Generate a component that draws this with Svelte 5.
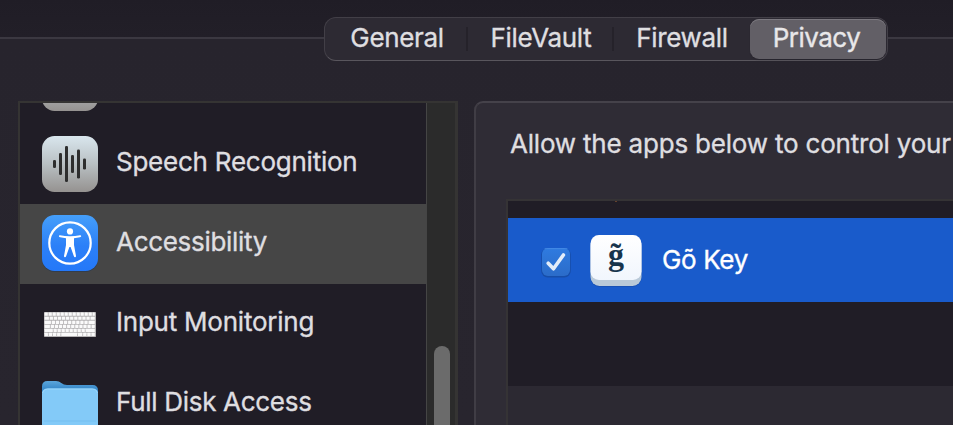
<script>
  const tabs = [
    { label: 'General', width: 142, spacing: -0.35 },
    { label: 'FileVault', width: 146, spacing: -0.3 },
    { label: 'Firewall', width: 136, spacing: -0.35 },
    { label: 'Privacy', width: 136, spacing: -0.5, active: true }
  ];
  const items = [
    { label: '', icon: 'blank', spacing: 0 },
    { label: 'Speech Recognition', icon: 'speech', spacing: -0.24 },
    { label: 'Accessibility', icon: 'access', spacing: -0.3, active: true },
    { label: 'Input Monitoring', icon: 'keyboard', spacing: -0.23 },
    { label: 'Full Disk Access', icon: 'folder', spacing: -0.3 }
  ];
  const bars = [[54.5, 8], [60.5, 22], [66.5, 36], [72.5, 18], [78.5, 29], [84.5, 11]];
  const keyRows = [
    [4, 4, 4, 4, 4, 4, 4, 4, 4, 4, 4, 4, 3],
    [5, 4, 4, 4, 4, 4, 4, 4, 4, 4, 4, 5],
    [7, 4, 4, 4, 4, 4, 4, 4, 4, 4, 7],
    [6, 4, 4, 4, 4, 4, 4, 4, 4, 4, 4, 4],
    [9, 4, 4, 4, 4, 4, 4, 4, 4, 10],
    [4, 4, 4, 4, 16, 5, 4, 4, 4]
  ];
  const keys = keyRows.flatMap((row, r) => {
    const total = row.reduce((a, b) => a + b, 0);
    let x = 2.6;
    return row.map((w) => {
      const width = (w / total) * 51;
      const key = { x, y: 13.6 + r * 4.05, w: width - 0.8 };
      x += width;
      return key;
    });
  });
</script>

<div class="window">
  <header>
    <i class="rule left"></i>
    <nav>
      {#each tabs as tab}
        <button class:active={tab.active} style:width="{tab.width}px" style:letter-spacing="{tab.spacing}px">{tab.label}</button>
      {/each}
    </nav>
    <i class="rule right"></i>
  </header>

  <main>
    <aside>
      <ul>
        {#each items as item}
          <li class:active={item.active}>
            <svg width="56" height="60" viewBox="0 0 56 60">
              {#if item.icon === 'blank' || item.icon === 'speech'}
                <defs>
                  <linearGradient id="silver" x1="0" y1="0" x2="0" y2="1">
                    <stop offset="0" stop-color="#d9e6ed" /><stop offset=".5" stop-color="#b9c0c3" /><stop offset="1" stop-color="#959290" />
                  </linearGradient>
                </defs>
                <rect width="56" height="56" rx="12.5" fill="url(#silver)" />
                {#if item.icon === 'speech'}
                  {#each bars as [x, h]}
                    <rect x={x - 43.5} y={28 - h / 2} width="3" height={h} rx="1.3" fill="#2e2e2e" />
                  {/each}
                {/if}
              {:else if item.icon === 'access'}
                <defs>
                  <linearGradient id="azure" x1="0" y1="0" x2="0" y2="1">
                    <stop offset="0" stop-color="#459ffa" /><stop offset=".55" stop-color="#2c80f8" /><stop offset="1" stop-color="#2478f8" />
                  </linearGradient>
                </defs>
                <rect y="1" width="56" height="56" rx="12.5" fill="#20334f" opacity=".5" />
                <rect width="56" height="56" rx="12.5" fill="url(#azure)" />
                <circle cx="28" cy="28" r="20.7" fill="none" stroke="#fff" stroke-width="2.2" />
                <circle cx="28" cy="16.4" r="3.1" fill="#fff" />
                <path d="M18 20.3 Q28 22.3 38 20.3 Q39.5 20.2 39.1 21.4 Q38.8 22 37.8 22.2 L32 23.3 V30 L34 41 Q34 42.2 33 42.2 Q32.2 42.2 31.8 41 L28.6 32 H27.4 L24.2 41 Q23.8 42.2 23 42.2 Q22 42.2 22 41 L24 30 V23.3 L18.2 22.2 Q17 22 16.9 21.2 Q16.9 20.2 18 20.3Z" fill="#fff" />
              {:else if item.icon === 'keyboard'}
                <rect x="2" y="13" width="52" height="25" rx=".7" fill="#b5b3b4" />
                {#each keys as k}
                  <rect x={k.x} y={k.y} width={k.w} height="3.2" rx=".35" fill="#fafafa" />
                {/each}
              {:else}
                <defs>
                  <linearGradient id="tab" x1="0" y1="0" x2="0" y2="1">
                    <stop offset="0" stop-color="#5ba6db" /><stop offset=".12" stop-color="#3c8ccb" /><stop offset="1" stop-color="#3989ca" />
                  </linearGradient>
                </defs>
                <path d="M0 60V7.5Q0 2 5.5 2H14Q17 2 19.3 4Q21.6 6 25 6H50.5Q56 6 56 11.5V60Z" fill="url(#tab)" />
                <path d="M0 60V15Q0 9.5 5.5 9.5H50.5Q56 9.5 56 15V60Z" fill="#83caf8" />
                <path d="M.5 14Q1.5 10 5.5 10H50.5Q54.5 10 55.5 14" fill="none" stroke="#9bd7fb" />
                <path d="M2 42H54" stroke="#75bff0" />
              {/if}
            </svg>
            <span style:letter-spacing="{item.spacing}px">{item.label}</span>
          </li>
        {/each}
      </ul>
      <div class="track"><div class="thumb"></div></div>
    </aside>

    <section>
      <p>Allow the apps below to control your</p>
      <div class="apps">
        <div class="peek"></div>
        <div class="app">
          <svg class="check" width="32" height="32" viewBox="0 0 32 32">
            <defs>
              <linearGradient id="box" x1="0" y1="0" x2="0" y2="1">
                <stop offset="0" stop-color="#2f7be0" /><stop offset="1" stop-color="#2b6cc9" />
              </linearGradient>
            </defs>
            <rect x="1.2" y="2" width="29.6" height="29.4" rx="6.5" fill="#174ea9" />
            <rect x="2" y="2" width="28" height="28" rx="6" fill="url(#box)" />
            <path d="M5 2.6H27" stroke="#4c90e9" stroke-linecap="round" opacity=".7" />
            <path d="M8.2 17.2L13.5 22.8L23.4 9" fill="none" stroke="#e3edf9" stroke-width="3.6" stroke-linecap="round" stroke-linejoin="round" />
          </svg>
          <svg class="key" width="52" height="54" viewBox="0 0 52 54">
            <defs>
              <linearGradient id="cap" x1="0" y1="0" x2="0" y2="1">
                <stop offset="0" stop-color="#fff" /><stop offset="1" stop-color="#f1f6fd" />
              </linearGradient>
            </defs>
            <rect x=".5" y="12" width="51" height="40" rx="9" fill="#154ba7" opacity=".6" />
            <rect x=".5" y="2" width="51" height="49" rx="9" fill="#b9c9d8" />
            <rect x=".5" y="0" width="51" height="45" rx="8.5" fill="url(#cap)" />
            <text x="26" y="29.5" text-anchor="middle">g̃</text>
          </svg>
          <span>Gõ Key</span>
        </div>
        <div class="empty"></div>
      </div>
    </section>
  </main>
</div>

<style>
  :global(body) { margin: 0; overflow: hidden; }
  * { box-sizing: border-box; }
  .window {
    width: 953px; height: 425px; overflow: hidden;
    display: flex; flex-direction: column;
    background: linear-gradient(#201d26 0, #221f28 37px, #27242d 38px, #28252e 100%);
    font: 26px/32px Inter, "Liberation Sans", sans-serif;
    color: #dfdee0;
    -webkit-text-stroke: .35px currentColor;
  }
  header { display: flex; height: 101px; padding-top: 17px; flex: none; }
  .rule { height: 2px; margin-top: 20px; background: #3b3841; }
  .left { width: 324px; }
  .right { flex: 1; }
  nav {
    display: flex; width: 564px; height: 44px; padding: 1px;
    border: 1px solid #423f47; border-bottom-color: #59565d; border-radius: 12px;
    background: #2d2a33;
  }
  button {
    position: relative; flex: none; height: 40px; padding: 0 0 2px; border: 0; border-radius: 9px;
    background: none; color: inherit; font: inherit; text-align: center; white-space: nowrap;
  }
  button:nth-child(-n + 2)::after {
    content: ''; position: absolute; right: 0; top: 8px; width: 2px; height: 24px; background: #25222a;
  }
  button.active {
    padding-right: 3px; background: #625f66; color: #e8e7e9;
    box-shadow: inset 0 1px #7b787f, 0 1px 1px #201d2680;
  }
  main { display: flex; gap: 16px; height: 324px; padding-left: 18px; }
  aside {
    display: flex; flex: none; width: 440px; overflow: hidden;
    border: solid #353433; border-width: 2px 3px 0 2px; background: #201d26;
  }
  ul { width: 406px; height: 400px; margin: -59px 0 0; padding: 0; list-style: none; }
  li { display: flex; height: 80px; padding: 11px 0 0 22px; gap: 18px; }
  li:nth-child(2) { padding-top: 12px; }
  li:nth-child(4) { padding-top: 15px; }
  li:nth-child(5) { padding-top: 15px; }
  li.active { background: #464646; }
  li span { padding-top: 11px; white-space: nowrap; }
  li:nth-child(2) span { padding-top: 10px; }
  li:nth-child(4) span, li:nth-child(5) span { padding-top: 7px; }
  li svg { flex: none; }
  .track { width: 29px; padding: 243px 0 0 7px; border-left: 1px solid #454545; background: #2b2b2b; }
  .thumb { width: 16px; height: 100px; border-radius: 8px; background: #6b6b6b; }
  section {
    flex: 1; min-width: 0; margin-right: -20px; padding: 25px 0 0 30px;
    border: 2px solid #403d45; border-top-color: #45424a; border-radius: 9px 0 0 0;
    border-right: 0; border-bottom: 0; background: #2f2c35;
  }
  p { margin: 0; height: 71px; padding-left: 4px; white-space: nowrap; letter-spacing: -.2px; }
  .apps { height: 240px; border: 2px solid #353335; background: #2c2932; }
  .peek { height: 17px; background: #201d26; }
  .peek::before { content: ''; display: block; width: 2px; height: 1px; margin-left: 107px; background: #65412c; }
  .app { display: flex; height: 84px; padding-left: 32px; background: #195bcb; color: #fff; }
  .check { margin-top: 28px; }
  .key { margin: 17px 0 0 17.5px; }
  .key text { font: bold 32px "Liberation Serif", serif; fill: #17344c; -webkit-text-stroke: 0; }
  .app span { margin: 26px 0 0 20.5px; letter-spacing: -.35px; }
  .empty { height: 84px; background: #201d26; }
</style>
